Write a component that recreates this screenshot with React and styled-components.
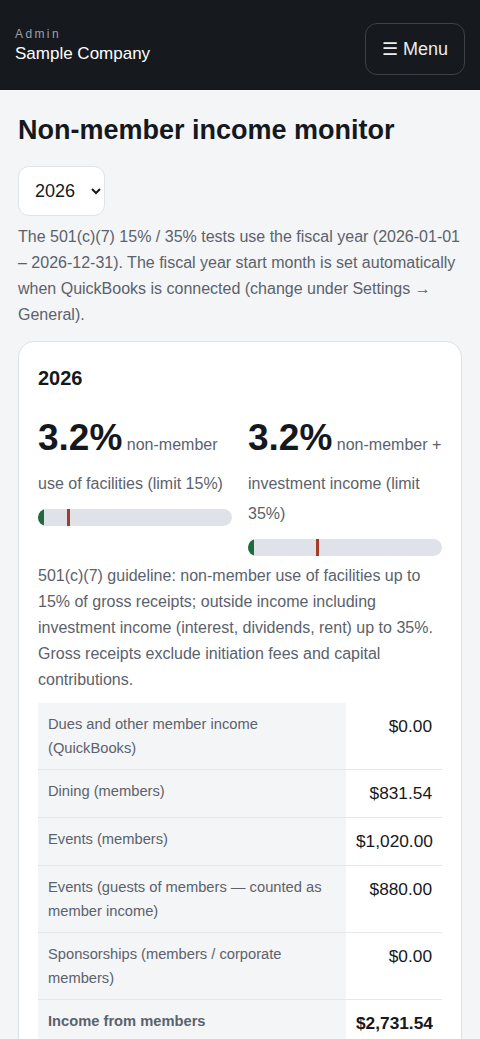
import styled, { createGlobalStyle } from "styled-components";

const GlobalStyle = createGlobalStyle`
  * {
    box-sizing: border-box;
  }
  body {
    margin: 0;
    background: #f4f5f7;
    font-family: "Liberation Sans", Arial, sans-serif;
    color: #15181d;
  }
`;

const Header = styled.header`
  height: 90px;
  background: #16191e;
  display: flex;
  align-items: center;
  justify-content: space-between;
  padding: 23px 15px 15px;
`;

const Brand = styled.div`
  align-self: flex-start;
  margin-top: 4px;
  display: flex;
  flex-direction: column;
  gap: 3px;
`;

const BrandKicker = styled.span`
  font-size: 12px;
  line-height: 14px;
  letter-spacing: 2.4px;
  color: #9ba1a9;
`;

const BrandName = styled.span`
  font-size: 17px;
  line-height: 20px;
  color: #ffffff;
`;

const MenuButton = styled.button`
  width: 100px;
  height: 52px;
  border: 1px solid #3d424a;
  border-radius: 12px;
  background: transparent;
  color: #ececec;
  font-family: inherit;
  font-size: 18px;
  padding: 0;
`;

const Main = styled.main`
  padding: 23px 18px 0;
`;

const Title = styled.h1`
  margin: 0 0 19px;
  font-size: 27px;
  line-height: 34px;
  font-weight: 700;
  color: #15181d;
`;

const YearSelect = styled.select`
  height: 50px;
  width: 87px;
  padding: 0 10px 0 12px;
  border: 1px solid #e0e3e8;
  border-radius: 11px;
  background: #ffffff;
  font-family: inherit;
  font-size: 18px;
  color: #15181d;
`;

const Note = styled.p`
  margin: 8px 0 13px;
  font-size: 16px;
  line-height: 26px;
  color: #5b626c;
`;

const Card = styled.section`
  background: #ffffff;
  border: 1px solid #dde1e6;
  border-radius: 16px;
  padding: 24px 19px 20px;
`;

const CardTitle = styled.h2`
  margin: 0 0 17px;
  font-size: 20px;
  line-height: 24px;
  font-weight: 700;
  color: #15181d;
`;

const Metrics = styled.div`
  display: grid;
  grid-template-columns: 1fr 1fr;
  gap: 16px;
  margin-bottom: 7px;
`;

const Metric = styled.div`
  line-height: 30px;
`;

const BigValue = styled.span`
  font-size: 37px;
  line-height: 62px;
  font-weight: 700;
  color: #15181d;
`;

const MetricLabel = styled.span`
  font-size: 16px;
  color: #5b626c;
`;

const Track = styled.div`
  position: relative;
  height: 17px;
  margin-top: 10px;
  border-radius: 9px;
  background: #dfe3e9;
  overflow: hidden;
`;

const Fill = styled.div`
  height: 100%;
  background: #1f6b3d;
  border-radius: 9px 0 0 9px;
`;

const LimitMark = styled.div`
  position: absolute;
  top: 0;
  bottom: 0;
  width: 3px;
  background: #a53b2a;
`;

const Guideline = styled.p`
  margin: 0 0 10px;
  font-size: 16px;
  line-height: 26px;
  color: #5b626c;
`;

const Table = styled.table`
  width: 100%;
  border-collapse: collapse;
  table-layout: fixed;
`;

const Row = styled.tr`
  border-bottom: 1px solid #e4e7eb;
`;

const LabelCell = styled.th`
  padding: 9px 10px;
  background: #f4f5f7;
  text-align: left;
  vertical-align: top;
  font-size: 14.7px;
  line-height: 24px;
  font-weight: ${(p) => (p.$bold ? 700 : 400)};
  color: #5b626c;
`;

const ValueCell = styled.td`
  width: 96px;
  padding: 9px 10px;
  text-align: right;
  vertical-align: top;
  font-size: 17.3px;
  line-height: 29px;
  font-weight: ${(p) => (p.$bold ? 700 : 400)};
  color: #15181d;
`;

const metrics = [
  { value: 3.2, label: "non-member use of facilities (limit 15%)", limit: 15 },
  { value: 3.2, label: "non-member + investment income (limit 35%)", limit: 35 },
];

const rows = [
  { label: "Dues and other member income (QuickBooks)", value: "$0.00" },
  { label: "Dining (members)", value: "$831.54" },
  { label: "Events (members)", value: "$1,020.00" },
  { label: "Events (guests of members — counted as member income)", value: "$880.00" },
  { label: "Sponsorships (members / corporate members)", value: "$0.00" },
  { label: "Income from members", value: "$2,731.54", bold: true },
];

export default function App() {
  return (
    <>
      <GlobalStyle />
      <Header>
        <Brand>
          <BrandKicker>Admin</BrandKicker>
          <BrandName>Sample Company</BrandName>
        </Brand>
        <MenuButton>☰ Menu</MenuButton>
      </Header>
      <Main>
        <Title>Non-member income monitor</Title>
        <YearSelect defaultValue="2026">
          <option value="2026">2026</option>
          <option value="2025">2025</option>
        </YearSelect>
        <Note>
          The 501(c)(7) 15% / 35% tests use the fiscal year (2026-01-01 – 2026-12-31). The fiscal
          year start month is set automatically when QuickBooks is connected (change under Settings
          → General).
        </Note>
        <Card>
          <CardTitle>2026</CardTitle>
          <Metrics>
            {metrics.map((m) => (
              <Metric key={m.label}>
                <BigValue>{m.value}%</BigValue> <MetricLabel>{m.label}</MetricLabel>
                <Track>
                  <Fill style={{ width: `${m.value}%` }} />
                  <LimitMark style={{ left: `${m.limit}%` }} />
                </Track>
              </Metric>
            ))}
          </Metrics>
          <Guideline>
            501(c)(7) guideline: non-member use of facilities up to 15% of gross receipts; outside
            income including investment income (interest, dividends, rent) up to 35%. Gross receipts
            exclude initiation fees and capital contributions.
          </Guideline>
          <Table>
            <tbody>
              {rows.map((r) => (
                <Row key={r.label}>
                  <LabelCell $bold={r.bold}>{r.label}</LabelCell>
                  <ValueCell $bold={r.bold}>{r.value}</ValueCell>
                </Row>
              ))}
            </tbody>
          </Table>
        </Card>
      </Main>
    </>
  );
}
